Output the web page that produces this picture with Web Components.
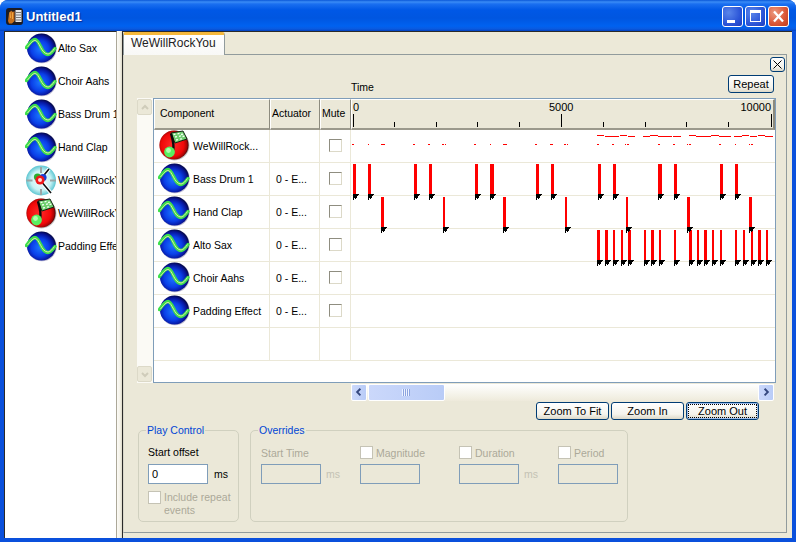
<!DOCTYPE html>
<html><head><meta charset="utf-8">
<style>
html,body{margin:0;padding:0;background:#fff}
body{width:796px;height:542px;overflow:hidden;font:10.5px "Liberation Sans",sans-serif;color:#000}
</style></head><body>
<xp-window title="Untitled1">
  <xp-list slot="side">
    <xp-item icon="wave">Alto Sax</xp-item>
    <xp-item icon="wave">Choir Aahs</xp-item>
    <xp-item icon="wave">Bass Drum 1</xp-item>
    <xp-item icon="wave">Hand Clap</xp-item>
    <xp-item icon="clock">WeWillRockYou</xp-item>
    <xp-item icon="note">WeWillRockYou</xp-item>
    <xp-item icon="wave">Padding Effect</xp-item>
  </xp-list>
  <xp-tabs tab="WeWillRockYou">
    <xp-toolbar>
      <xp-button slot="close" kind="x" aria-label="Close"></xp-button>
      <span slot="time">Time</span>
      <xp-button slot="repeat" style="width:46px">Repeat</xp-button>
    </xp-toolbar>
    <xp-timeline>
      <xp-row icon="note" name="WeWillRock..." actuator="">
        <xp-track
          dashes="352-354:14,368-369:14,381-385:14,413-415:14,428-430:14,442-444:14,445-446:14,474-476:14,490-491:14,503-506:14,506-507:14,535-537:14,550-553:14,564-566:14,567-568:14,597-599:14,612-614:14,625-626:14,627-629:14,658-660:14,673-675:14,687-688:14,689-691:14,719-721:14,735-736:14,749-750:14,751-753:14,597-604:5,605-619:6,620-627:5,628-635:6,643-650:6,650-658:5,658-672:6,673-681:6,689-696:5,696-711:6,711-719:5,719-731:6,734-742:6,742-749:5,750-757:6,758-765:5,765-773:6"></xp-track>
      </xp-row>
      <xp-row icon="wave" name="Bass Drum 1" actuator="0 - E...">
        <xp-track bars="353-356,368-371,414-417,429-432,475-478,490-494,536-539,551-554,598-601,613-616,658-662,674-677,720-723,735-738"></xp-track>
      </xp-row>
      <xp-row icon="wave" name="Hand Clap" actuator="0 - E...">
        <xp-track bars="381-384,443-445,503-506,565-567,626-628,687-690,749-752"></xp-track>
      </xp-row>
      <xp-row icon="wave" name="Alto Sax" actuator="0 - E...">
        <xp-track bars="597-600,605-608,613-615,621-623,628-631,644-646,651-654,659-661,674-676,689-692,697-699,704-707,712-714,720-722,735-737,743-745,751-753,758-761,766-768"></xp-track>
      </xp-row>
      <xp-row icon="wave" name="Choir Aahs" actuator="0 - E..."><xp-track></xp-track></xp-row>
      <xp-row icon="wave" name="Padding Effect" actuator="0 - E..."><xp-track></xp-track></xp-row>
      <xp-row empty><xp-track></xp-track></xp-row>
    </xp-timeline>
    <xp-hscroll></xp-hscroll>
    <xp-zoombar>
      <xp-button>Zoom To Fit</xp-button>
      <xp-button>Zoom In</xp-button>
      <xp-button focused>Zoom Out</xp-button>
    </xp-zoombar>
    <xp-controls>
      <xp-group legend="Play Control" style="width:101px">
        <xp-play></xp-play>
      </xp-group>
      <xp-group legend="Overrides" style="width:378px">
        <xp-overrides>
          <xp-field label="Start Time" unit="ms"></xp-field>
          <xp-field label="Magnitude" check></xp-field>
          <xp-field label="Duration" check unit="ms"></xp-field>
          <xp-field label="Period" check></xp-field>
        </xp-overrides>
      </xp-group>
    </xp-controls>
  </xp-tabs>
</xp-window>
<script>
const FONT='"Liberation Sans",sans-serif';
let uid=0;
function iconSvg(kind){
  const id='i'+(++uid);
  if(kind==='wave')return `<svg width="32" height="32" viewBox="0 0 32 32">
    <defs><radialGradient id="${id}" cx="45%" cy="55%" r="55%"><stop offset="0" stop-color="#1a78ff"/><stop offset=".55" stop-color="#0a3fe8"/><stop offset=".85" stop-color="#07149a"/><stop offset="1" stop-color="#050a50"/></radialGradient></defs>
    <circle cx="17" cy="15.500" r="14.700" fill="#8a86b0" opacity=".55"/>
    <circle cx="16.500" cy="15" r="14.500" fill="url(#${id})"/>
    <path d="M1.500 14.500C4 11 7 6.500 10 6.500C15 6.500 16 21.500 23 21.500C26 21.500 28 18 30 15.500" fill="none" stroke="#3ce04a" stroke-width="3.400" stroke-linecap="round"/>
    <path d="M2.500 14C5 11 7.500 7.500 10 7.500C14.500 7.500 16 21 23 21C25.500 21 27.500 18 29.500 15.500" fill="none" stroke="#dbe6a8" stroke-width="1"/>
  </svg>`;
  if(kind==='note')return `<svg width="32" height="32" viewBox="0 0 32 32">
    <defs><radialGradient id="${id}" cx="45%" cy="50%" r="55%"><stop offset="0" stop-color="#ff2a2a"/><stop offset=".7" stop-color="#f00808"/><stop offset=".9" stop-color="#a50505"/><stop offset="1" stop-color="#3c0606"/></radialGradient></defs>
    <circle cx="16.500" cy="15.500" r="15" fill="#888" opacity=".5"/>
    <circle cx="16" cy="15" r="14.600" fill="url(#${id})"/>
    <path d="M13 3L25 1L29 9L17 13Z" fill="#6fcf6f" stroke="#142414" stroke-width="1"/>
    <path d="M15.500 4.500l2-.4M19.500 3.800l2-.4M23 4.500l2-.4M17 7l2-.4M21 6.300l2-.4M24.500 6.500l2-.4M18 10l2-.4M22 9.200l2-.4" stroke="#f2fff2" stroke-width="1.300"/>
    <path d="M13 3.500C15 10 16.500 15 15 21" fill="none" stroke="#0b0b0b" stroke-width="2.400"/>
    <circle cx="11.500" cy="22" r="5.400" fill="#58f060"/><circle cx="10.500" cy="20.500" r="2.400" fill="#b0ffb0"/>
  </svg>`;
  return `<svg width="32" height="32" viewBox="0 0 32 32">
    <defs><radialGradient id="${id}" cx="50%" cy="50%" r="55%"><stop offset="0" stop-color="#f4ffff"/><stop offset=".6" stop-color="#c8f2f4"/><stop offset=".92" stop-color="#58c4d0"/><stop offset="1" stop-color="#2f8a98"/></radialGradient></defs>
    <circle cx="16" cy="15.500" r="15" fill="url(#${id})"/>
    <path d="M16 2v6M16 24v6M1.500 15.500h6M25 15.500h6" stroke="#9aa5a5" stroke-width="2"/>
    <path d="M15 15L24 4" stroke="#fff" stroke-width="3.600"/><path d="M15 15L24 4" stroke="#111" stroke-width="1.600"/>
    <path d="M15 15L26 28" stroke="#fff" stroke-width="3.600"/><path d="M15 15L26 28" stroke="#111" stroke-width="1.600"/>
    <circle cx="12.500" cy="12" r="3.600" fill="#28b030"/><circle cx="18" cy="12.500" r="3.600" fill="#1a3fd8"/>
    <circle cx="15" cy="15" r="4.600" fill="#f01818"/><circle cx="15" cy="15" r="2" fill="#ffd8d8"/>
  </svg>`;
}
function def(name,css,html,extra){
  const cls=class extends HTMLElement{
    connectedCallback(){
      if(this.shadowRoot)return;
      const r=this.attachShadow({mode:'open'});
      r.innerHTML=`<style>${css}</style>`+(typeof html==='function'?html(this):html);
      if(extra)extra(this,r);
    }
  };
  customElements.define(name,cls);
}
const chev=(d,c)=>`<svg width="15" height="15" viewBox="0 0 15 15"><path d="${d}" fill="none" stroke="${c}" stroke-width="2"/></svg>`;

def('xp-icon',':host{display:block;width:32px;height:32px;flex:none}svg{display:block}',h=>iconSvg(h.getAttribute('kind')));

def('xp-window',`
:host{display:flex;flex-direction:column;width:796px;height:542px;border-radius:8px 8px 0 0;overflow:hidden;
 background:#0a50dc;font:10.5px ${FONT}}
.bar{height:31px;box-sizing:border-box;flex:none;display:flex;align-items:center;padding:2px 7px 0 6px;
 background:linear-gradient(#0a57d8 0,#3a8cf6 2px,#1a6ff0 4px,#0058e6 10px,#0056e0 18px,#0062f0 26px,#0a5ae0 29px,#0040c0 31px)}
.app{width:17px;height:17px}
.t{font:bold 13px ${FONT};color:#fff;margin-left:3px;text-shadow:1px 1px 1px #0a2a90;flex:1}
.b{width:21px;height:21px;box-sizing:border-box;border:1px solid #fff;border-radius:3px;margin-left:2px;
 background:radial-gradient(circle at 30% 30%,#5a86ea,#2c56d8 60%,#1c3cc0);}
.b svg{display:block}
.c{background:radial-gradient(circle at 30% 30%,#ec9a80,#dc5a3a 55%,#c03a1c)}
.main{flex:1;display:flex;margin:0 4px 4px;background:#ece9d8;min-height:0}
.side{width:113px;flex:none;box-sizing:border-box;display:flex;border-top:1px solid #2a2a2a;border-left:1px solid #2a2a2a;border-right:1px solid #aca899;background:#fff}
.split{width:5px;flex:none;background:linear-gradient(90deg,#fbfaf5,#f4f2e8 60%,#dcd9c8)}
.right{flex:1;min-width:0;display:flex;border-top:1px solid #2a2a2a;border-left:1px solid #2a2a2a}
`,h=>`<div class="bar">
 <svg class="app" viewBox="0 0 17 17"><rect width="17" height="17" rx="3" fill="#1c1c24"/><path d="M2 13L3 5.500 5 2.500 7 4 8.500 3V13L6 15.500H3Z" fill="#c8701c"/><path d="M4 4L4.500 10M6.500 4.500L6.500 11" stroke="#f0a840"/><rect x="9.500" y="2" width="6" height="12" fill="#e8e8e8"/><path d="M10 4.500h5M10 7h5M10 9.500h5M10 12h5" stroke="#777"/></svg>
 <div class="t">${h.getAttribute('title')}</div>
 <div class="b"><svg width="19" height="19"><rect x="4" y="13" width="8" height="3" fill="#fff"/></svg></div>
 <div class="b"><svg width="19" height="19"><rect x="4.500" y="3.500" width="10" height="11" fill="none" stroke="#fff"/><rect x="4" y="3" width="11" height="3" fill="#fff"/></svg></div>
 <div class="b c"><svg width="19" height="19"><path d="M5 4.500L14 14.500M14 4.500L5 14.500" stroke="#fff" stroke-width="2.300"/></svg></div>
</div>
<div class="main"><div class="side"><slot name="side"></slot></div><div class="split"></div><div class="right"><slot></slot></div></div>`);

def('xp-list',`:host{display:block;flex:1;min-width:0;overflow:hidden;background:#fff}`,`<slot></slot>`);
def('xp-item',`:host{display:flex;align-items:center;height:33px;padding-left:20px;white-space:nowrap;overflow:hidden;color:#000;font-size:10.5px}
 xp-icon{margin-right:1px}
 span{padding-bottom:2px}`,h=>`<xp-icon kind="${h.getAttribute('icon')}"></xp-icon><span><slot></slot></span>`);

def('xp-tabs',`:host{display:flex;flex-direction:column;flex:1;min-width:0;padding:0 5px 5px 0;box-sizing:border-box}
.tab{width:102px;height:23px;box-sizing:border-box;border:1px solid #919b9c;border-bottom:0;border-top:3px solid #f5b83c;border-radius:3px 3px 0 0;
 background:linear-gradient(#fff,#f8f8f6);font-size:12px;padding:0 0 0 7px;color:#222;margin-bottom:-1px;position:relative;z-index:1;line-height:16px}
.pane{flex:1;min-height:0;border:1px solid #919b9c;border-left-color:#d8d6c8;background:#ebe8d8;padding:2px 1px 0 13px}
`,h=>`<div class="tab">${h.getAttribute('tab')}</div><div class="pane"><slot></slot></div>`);

def('xp-toolbar',`:host{display:grid;grid-template-columns:214px 1fr auto;grid-template-rows:15px 18px;row-gap:3px;margin-bottom:5px;font-size:10.5px}
.x{grid-column:1/4;justify-self:end;height:15px}
.t{grid-row:2;grid-column:2;align-self:end}
.r{grid-row:2;grid-column:3;margin-right:11px;height:18px}`,
`<div class="x"><slot name="close"></slot></div><div class="t"><slot name="time"></slot></div><div class="r"><slot name="repeat"></slot></div>`);

def('xp-button',`:host{display:inline-flex;align-items:stretch;justify-content:stretch;box-sizing:border-box;height:18px;padding:0;vertical-align:top;
 border:1px solid #003c74;border-radius:3px;background:linear-gradient(#fff,#f4f3ec 70%,#dcd8c8);font-size:11px;color:#000;white-space:nowrap;line-height:14px}
:host([kind=x]){width:15px;height:15px}
:host([focused]){box-shadow:inset 0 0 0 1px #9dbcea}
.f{flex:1;display:flex;align-items:center;justify-content:center;box-sizing:border-box;margin:1px;padding:0 3px}
:host([focused]) .f{outline:1px dotted #000;outline-offset:-1px}
svg{display:block}`,
h=>h.getAttribute('kind')==='x'?`<svg width="13" height="13"><path d="M2.500 2.500L10.500 10.500M10.500 2.500L2.500 10.500" stroke="#000"/></svg>`:`<span class="f"><slot></slot></span>`);

def('xp-timeline',`:host{display:flex;height:285px}
.sb{width:16px;flex:none;background:#fbfaf5;display:flex;flex-direction:column;justify-content:space-between;padding-top:1px;box-sizing:border-box}
.btn{width:15px;height:16px;box-sizing:border-box;border:1px solid #dcd9c8;border-radius:2px;background:#ebe8d8;display:block;overflow:hidden}
.grid{width:623px;flex:none;box-sizing:border-box;border:1px solid #7f9db9;background:#fff;overflow:hidden;display:flex;flex-direction:column}
.hd{display:grid;grid-template-columns:116px 50px 31px 424px;height:31px;flex:none;font-size:10.5px}
.hc{box-sizing:border-box;background:#ebe8d8;border-top:1px solid #fff;border-left:1px solid #fff;border-right:1px solid #8d8b7e;border-bottom:2px solid #9b998c;display:flex;align-items:center;padding:0 0 2px 5px}
.hc.n{padding-left:1px}
.ruler{position:relative;background:#ebe8d8;border-top:1px solid #fff;border-left:1px solid #fff;border-right:2px solid #8d8b7e;border-bottom:2px solid #9b998c;box-sizing:border-box}
.tick{position:absolute;width:1px;background:#000;bottom:1px;height:5px}
.tick.m{height:13px}
.lab{position:absolute;top:1px;font-size:11px;line-height:13px}
`,()=>{
  const tx=[353,394,436,477,519,561,603,645,686,728,771],maj=[353,561,771];
  return `<div class="sb"><span class="btn">${chev('M4 9L7 6L10 9','#cfccba')}</span><span class="btn" style="margin-bottom:1px">${chev('M4 6L7 9L10 6','#cfccba')}</span></div>
  <div class="grid"><div class="hd"><div class="hc">Component</div><div class="hc n">Actuator</div><div class="hc n">Mute</div>
  <div class="ruler">${tx.map(x=>`<span class="tick ${maj.includes(x)?'m':''}" style="left:${x-352}px"></span>`).join('')}
  <span class="lab" style="left:1px">0</span><span class="lab" style="left:197px">5000</span><span class="lab" style="right:2px">10000</span></div></div>
  <slot></slot></div>`;
});

def('xp-row',`:host{display:grid;grid-template-columns:116px 50px 31px 424px;height:33px;flex:none;box-sizing:border-box;font-size:10.5px}
.c{box-sizing:border-box;border-bottom:1px solid #ebe8d8;border-right:1px solid #ebe8d8;display:flex;align-items:center;white-space:nowrap;overflow:hidden}
.n{padding-left:4px}.n span{margin-left:3px}
.a{padding-left:6px;justify-content:flex-start}
.m{justify-content:center;padding-left:1px}
.t{border-right:0;overflow:visible;display:block}
.cb{width:13px;height:13px;box-sizing:border-box;border:1px solid;border-color:#8f8d80 #dcd9c8 #dcd9c8 #8f8d80;background:#fff;display:block;margin-bottom:2px}
`,h=>{
 const e=h.hasAttribute('empty');
 return `<div class="c n">${e?'':`<xp-icon kind="${h.getAttribute('icon')}"></xp-icon><span>${h.getAttribute('name')}</span>`}</div>
 <div class="c a">${e?'':h.getAttribute('actuator')}</div>
 <div class="c m">${e?'':'<i class="cb"></i>'}</div>
 <div class="c t"><slot></slot></div>`;
});

def('xp-track',`:host{display:block;position:relative;height:32px}
.bar{position:absolute;top:1px;height:30px;background:#f00}
.d{position:absolute;height:1px;background:#f00}
svg{position:absolute;top:31px;display:block;z-index:1}`,h=>{
 const O=351;let s='';
 (h.getAttribute('bars')||'').split(',').filter(Boolean).forEach(b=>{
   const [a,z]=b.split('-').map(Number);
   s+=`<div class="bar" style="left:${a-O}px;width:${z-a}px"></div><svg width="7" height="6" style="left:${a-O}px" shape-rendering="crispEdges"><path d="M0 0H6V1H5V2H4V4H3V5H2V4H1V6H0Z" fill="#000"/></svg>`;
 });
 (h.getAttribute('dashes')||'').split(',').filter(Boolean).forEach(d=>{
   const [r,y]=d.split(':');const [a,z]=r.split('-').map(Number);
   s+=`<div class="d" style="left:${a-O}px;width:${z-a}px;top:${y}px"></div>`;
 });
 return s;
});

def('xp-hscroll',`:host{display:flex;height:17px;margin:1px 11px 0 214px;background:linear-gradient(#fff,#f3f1e6 70%,#eeeadb);gap:1px}
.b,.th{box-sizing:border-box;border:1px solid #fff;border-radius:2px;background:linear-gradient(90deg,#cbd8fb,#b9ccf7);display:flex;align-items:center;justify-content:center}
.b{width:16px}.th{width:77px}
.sp{flex:1}
svg{display:block}`,
`<div class="b">${chev('M9 3.500L5.500 7L9 10.500','#34477e')}</div><div class="th"><svg width="9" height="7"><path d="M.5 0v7M2.500 0v7M4.500 0v7M6.500 0v7" stroke="#eef3ff"/><path d="M1.500 0v7M3.500 0v7M5.500 0v7M7.500 0v7" stroke="#8ca4e0"/></svg></div><div class="sp"></div><div class="b">${chev('M6 3.500L9.500 7L6 10.500','#34477e')}</div>`);

def('xp-zoombar',`:host{display:flex;justify-content:flex-end;gap:2px;margin:1px 26px 0 0}
::slotted(xp-button){width:73px}`,`<slot></slot>`);

def('xp-controls',`:host{display:flex;gap:11px;margin:10px 0 0 1px}`,`<slot></slot>`);

def('xp-group',`:host{display:block;position:relative;box-sizing:border-box;height:92px;border:1px solid #d0d0bf;border-radius:5px}
.l{position:absolute;left:7px;top:-7px;background:#ebe8d8;color:#0046d5;padding:0 1px;line-height:13px;font-size:10.5px}`,
h=>`<span class="l">${h.getAttribute('legend')}</span><slot></slot>`);

const box=`box-sizing:border-box;width:60px;height:20px;border:1px solid #7f9db9;display:block;font-size:11px;line-height:18px;padding-left:3px;`;
const cb=`.cb{width:13px;height:13px;box-sizing:border-box;border:1px solid #c5c3b5;background:#fff;display:block;flex:none}`;
def('xp-play',`:host{display:block;padding:14px 0 0 9px;font-size:10.5px}
.l{height:19px;line-height:15px}
.r{display:flex;align-items:center;gap:6px}
.i{${box}background:#fff;color:#000}
.c{display:flex;gap:3px;margin-top:7px;color:#aca899;line-height:13px;padding-top:0}
${cb}`,`<div class="l">Start offset</div><div class="r"><div class="i">0</div><span>ms</span></div>
<div class="c"><i class="cb"></i><span>Include repeat<br>events</span></div>`);
def('xp-overrides',`:host{display:grid;grid-template-columns:repeat(4,99px);padding:15px 0 0 10px}`,`<slot></slot>`);
def('xp-field',`:host{display:block;color:#aca899;font-size:10.5px}
.l{display:flex;align-items:center;gap:3px;height:13px;margin-bottom:5px;white-space:nowrap}
.r{display:flex;align-items:center;gap:5px}
.i{${box}background:#ebe8d8}
.u{color:#c4c2b4}
${cb}`,h=>`<div class="l">${h.hasAttribute('check')?'<i class="cb"></i>':''}<span>${h.getAttribute('label')}</span></div>
<div class="r"><div class="i"></div>${h.getAttribute('unit')?`<span class="u">${h.getAttribute('unit')}</span>`:''}</div>`);
</script>
</body></html>
